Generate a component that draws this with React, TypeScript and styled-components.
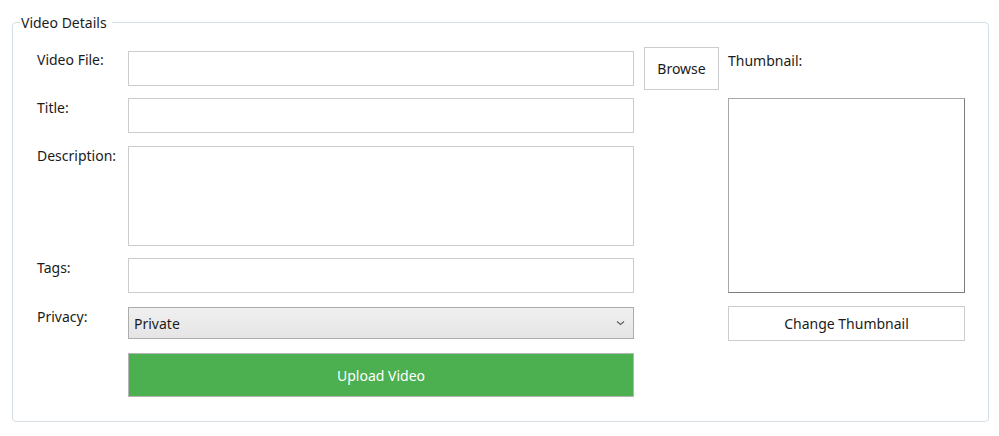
import styled, { createGlobalStyle } from 'styled-components'

const GlobalStyle = createGlobalStyle`
  html, body {
    margin: 0;
    padding: 0;
    background: #ffffff;
  }
  body {
    font-family: "Noto Sans", "Open Sans", sans-serif;
    font-size: 14px;
    color: #1b1b1b;
  }
`

const Page = styled.div`
  width: 999px;
  height: 436px;
  box-sizing: border-box;
  padding: 13px 10px 14px 12px;
  overflow: hidden;
`

const GroupBox = styled.fieldset`
  margin: 0;
  min-width: 0;
  height: 100%;
  box-sizing: border-box;
  border: 1px solid #d5dfe5;
  border-radius: 4px;
  padding: 15px 23px 0 24px;
`

const Legend = styled.legend`
  margin-left: -17px;
  padding: 0 5px 0 1px;
  line-height: 19px;
  font-size: 14px;
`

const FormGrid = styled.div`
  display: grid;
  grid-template-columns: 91px 506px 85px 246px;
  grid-template-rows: 51px 48px 112px 49px 46px 44px;
`

const Label = styled.label<{ $top?: number }>`
  align-self: start;
  margin-top: ${({ $top = 0 }) => $top}px;
  line-height: 19px;
`

const TextBox = styled.input<{ $top?: number }>`
  align-self: start;
  margin: ${({ $top = 0 }) => $top}px 0 0;
  height: 35px;
  width: 100%;
  box-sizing: border-box;
  border: 1px solid #cccccc;
  background: #ffffff;
  padding: 0 6px;
  font: inherit;
  outline: none;
`

const TextArea = styled.textarea`
  align-self: start;
  margin: 0;
  height: 100px;
  width: 100%;
  box-sizing: border-box;
  border: 1px solid #cccccc;
  background: #ffffff;
  padding: 4px 6px;
  font: inherit;
  resize: none;
  outline: none;
`

const Combo = styled.div`
  align-self: start;
  height: 32px;
  box-sizing: border-box;
  border: 1px solid #acacac;
  background: linear-gradient(#f0f0f0, #e5e5e5);
  display: flex;
  align-items: center;
  justify-content: space-between;
  padding: 0 8px 0 5px;
`

const PlainButton = styled.button<{ $width: number; $height: number; $top?: number }>`
  justify-self: end;
  align-self: start;
  width: ${({ $width }) => $width}px;
  height: ${({ $height }) => $height}px;
  margin: ${({ $top = 0 }) => $top}px 0 0;
  box-sizing: border-box;
  border: 1px solid #cccccc;
  background: #ffffff;
  color: #1b1b1b;
  font: inherit;
  padding: 0;
  cursor: pointer;
`

const UploadButton = styled.button`
  align-self: start;
  height: 44px;
  box-sizing: border-box;
  border: 1px solid #b4b4b4;
  background: #4caf50;
  color: #ffffff;
  font: inherit;
  padding: 0;
  cursor: pointer;
`

const ThumbLabel = styled.span`
  justify-self: end;
  align-self: start;
  width: 237px;
  margin-top: 4px;
  line-height: 19px;
`

const ThumbnailBox = styled.div`
  justify-self: end;
  align-self: start;
  grid-column: 4;
  grid-row: 2 / span 3;
  width: 237px;
  height: 195px;
  box-sizing: border-box;
  border: 1px solid #a8a8a8;
  border-right-color: #7c7c7c;
  border-bottom-color: #7c7c7c;
  background: #ffffff;
`

const Chevron = () => (
  <svg width="9" height="6" viewBox="0 0 9 6">
    <path d="M1 1.5 L4.5 4.5 L8 1.5" fill="none" stroke="#606060" strokeWidth="1.2" />
  </svg>
)

export default function App() {
  return (
    <Page>
      <GlobalStyle />
      <GroupBox>
        <Legend>Video Details</Legend>
        <FormGrid>
          <Label $top={3}>Video File:</Label>
          <TextBox $top={4} />
          <PlainButton $width={75} $height={43}>
            Browse
          </PlainButton>
          <ThumbLabel>Thumbnail:</ThumbLabel>

          <Label>Title:</Label>
          <TextBox style={{ gridColumn: 2 }} />
          <ThumbnailBox />

          <Label style={{ gridColumn: 1 }}>Description:</Label>
          <TextArea />

          <Label style={{ gridColumn: 1 }}>Tags:</Label>
          <TextBox />

          <Label style={{ gridColumn: 1 }}>Privacy:</Label>
          <Combo>
            <span>Private</span>
            <Chevron />
          </Combo>
          <span />
          <PlainButton $width={237} $height={35} $top={-1}>
            Change Thumbnail
          </PlainButton>

          <span />
          <UploadButton>Upload Video</UploadButton>
        </FormGrid>
      </GroupBox>
    </Page>
  )
}
